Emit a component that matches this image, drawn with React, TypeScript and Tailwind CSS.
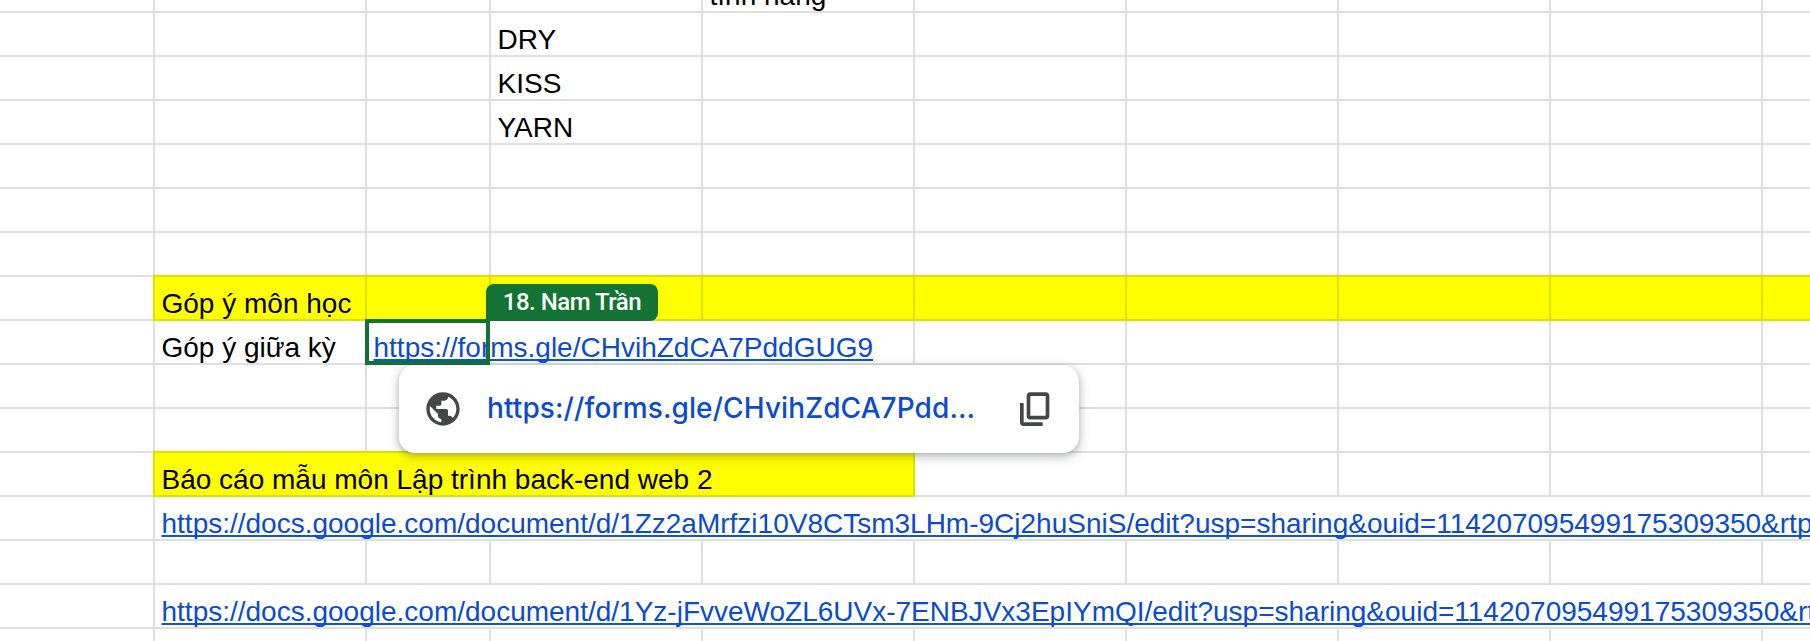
import React from "react";

type Cell = {
  width: string;
  text?: string;
  link?: boolean;
  fill?: boolean;
  bare?: boolean;
};

const W = [
  "w-[155px]", "w-[212px]", "w-[124px]", "w-[212px]", "w-[212px]",
  "w-[212px]", "w-[212px]", "w-[212px]", "w-[212px]", "w-[212px]",
];

const blank = (): Cell[] => W.map((width) => ({ width }));

function withCells(changes: Record<number, Partial<Cell>>): Cell[] {
  return blank().map((c, i) => ({ ...c, ...changes[i] }));
}

// A long value in the second column that runs over every cell to its right.
const spill = (text: string): Cell[] =>
  blank().map((c, i) => (i === 1 ? { ...c, text, link: true, bare: true } : i > 1 ? { ...c, bare: true } : c));

const rows: Cell[][] = [
  withCells({ 4: { text: "tính năng" } }),
  withCells({ 3: { text: "DRY" } }),
  withCells({ 3: { text: "KISS" } }),
  withCells({ 3: { text: "YARN" } }),
  blank(),
  blank(),
  blank(),
  blank().map((c, i) => (i > 0 ? { ...c, fill: true, text: i === 1 ? "Góp ý môn học" : undefined } : c)),
  withCells({
    1: { text: "Góp ý giữa kỳ" },
    2: { text: "https://forms.gle/CHvihZdCA7PddGUG9", link: true, bare: true },
    3: { bare: true },
  }),
  blank(),
  blank(),
  [
    { width: "w-[155px]" },
    { width: "w-[760px]", fill: true, text: "Báo cáo mẫu môn Lập trình back-end web 2" },
    ...blank().slice(5),
  ],
  spill("https://docs.google.com/document/d/1Zz2aMrfzi10V8CTsm3LHm-9Cj2huSniS/edit?usp=sharing&ouid=114207095499175309350&rtpof=true&sd=true"),
  blank(),
  spill("https://docs.google.com/document/d/1Yz-jFvveWoZL6UVx-7ENBJVx3EpIYmQI/edit?usp=sharing&ouid=114207095499175309350&rtpof=true&sd=true"),
  blank(),
];

function SheetCell({ cell }: { cell: Cell }) {
  return (
    <div className={`flex h-full shrink-0 ${cell.width}`}>
      <div
        className={
          cell.fill
            ? "-ml-[2px] -mt-[2px] h-[46px] w-[calc(100%+2px)] shrink-0 border-2 border-[#e1e100] bg-[#ffff00] pl-[6.5px] pt-[9px]"
            : `h-full w-full border-b-2 border-[#e0e0e0] pl-[6.5px] pt-[9px] ${cell.bare ? "" : "border-r-2"}`
        }
      >
        {cell.text && (
          <span
            className={`relative block w-max whitespace-pre text-[28px] leading-[36px] ${
              cell.link
                ? "text-[#0b4bcf] underline decoration-[#1155cc] decoration-[2px] underline-offset-[2px] [text-decoration-skip-ink:none]"
                : "text-black"
            }`}
          >
            {cell.text}
          </span>
        )}
      </div>
    </div>
  );
}

function LinkCard() {
  return (
    <div className="absolute left-[399px] top-[365px] flex h-[88px] w-[680px] items-center rounded-[16px] bg-white shadow-[0_2px_6px_rgba(60,64,67,0.3),0_4px_12px_2px_rgba(60,64,67,0.15)]">
      <svg viewBox="0 0 24 24" className="ml-[24px] size-[40px] fill-[#444746]">
        <path d="M12 2C6.480 2 2 6.480 2 12s4.480 10 10 10 10-4.480 10-10S17.520 2 12 2zM4 12c0-.610.080-1.210.210-1.780L8.990 15v1c0 1.100.900 2 2 2v1.930C7.060 19.430 4 16.070 4 12zm13.890 5.400c-.260-.810-1-1.400-1.900-1.400h-1v-3c0-.550-.450-1-1-1h-6v-2h2c.550 0 1-.450 1-1V7h2c1.100 0 2-.900 2-2v-.410C17.920 5.770 20 8.650 20 12c0 2.080-.810 3.980-2.110 5.400z" />
      </svg>
      <a className="-mt-[2px] ml-[24px] w-[500px] whitespace-nowrap font-['Inter',sans-serif] text-[28px] font-medium tracking-[0.1px] text-[#0b4bcf]">
        https://forms.gle/CHvihZdCA7Pdd...
      </a>
      <svg viewBox="0 0 24 24" className="ml-[28px] size-[40px] fill-[#444746]">
        <path d="M9 18.300c-1.100 0-2-.900-2-2V4c0-1.100.900-2 2-2h9.600c1.100 0 2 .900 2 2v12.300c0 1.100-.900 2-2 2H9zm.200-2.200h9.200V4.200H9.200v11.900zM5 22.200c-1.100 0-2-.900-2-2V8.400h2.200V20h11.400v2.200H5z" />
      </svg>
    </div>
  );
}

export default function App() {
  return (
    <div className="relative h-[641px] w-full overflow-hidden bg-white font-['Liberation_Sans',Arial,sans-serif]">
      <div className="-mt-[31px] flex flex-col">
        {rows.map((row, r) => (
          <div key={r} className="flex h-[44px] shrink-0">
            {row.map((cell, c) => (
              <SheetCell key={c} cell={cell} />
            ))}
          </div>
        ))}
      </div>
      <div className="absolute left-[365px] top-[319px] h-[46px] w-[125px] border-4 border-[#137333]" />
      <div className="absolute left-[486px] top-[284px] flex h-[37px] w-[172px] items-center justify-center rounded-[8px] rounded-bl-none bg-[#137333] pb-[2px] font-['Roboto',sans-serif] text-[24px] font-medium tracking-[-0.5px] text-white">
        18. Nam Trần
      </div>
      <LinkCard />
    </div>
  );
}
